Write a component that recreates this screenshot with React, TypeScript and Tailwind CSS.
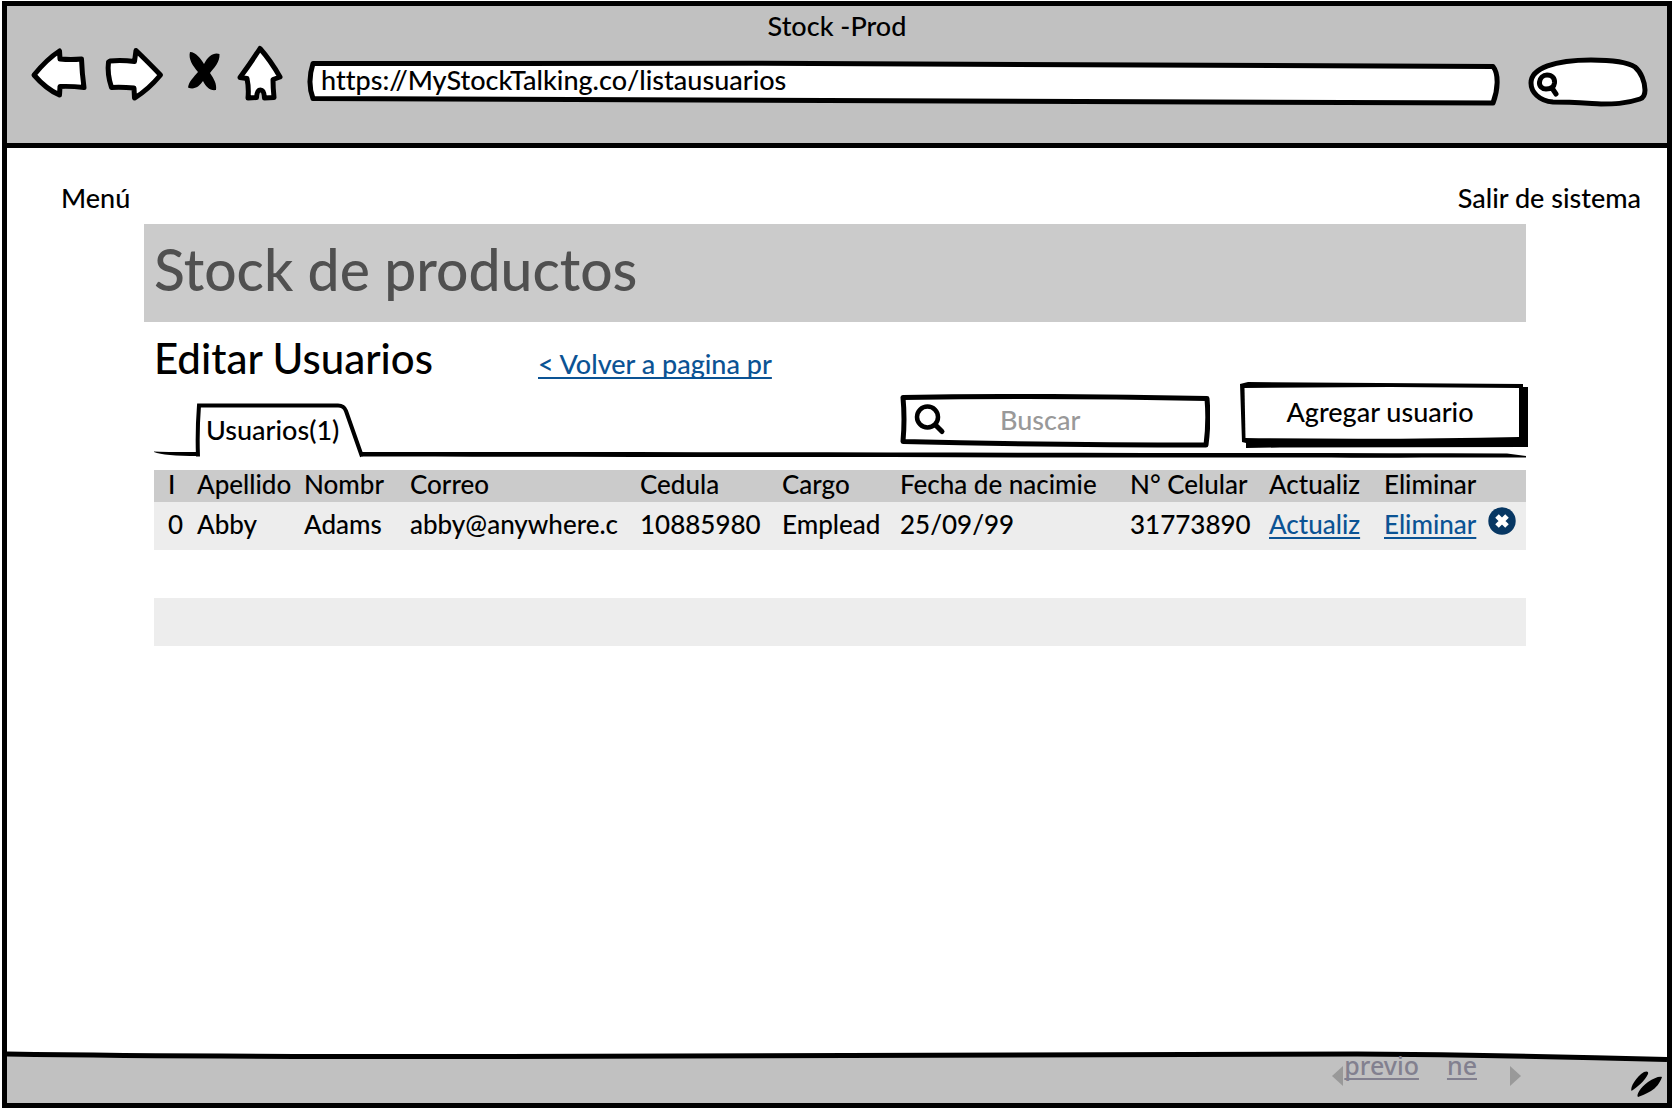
import type { ReactNode } from "react";

const linkStyle = "text-[#0b5394] underline decoration-2 underline-offset-3 [text-decoration-skip-ink:none]";

function IconButton({ label, viewBox, className, children }: { label: string; viewBox: string; className: string; children: ReactNode }) {
  return (
    <button type="button" aria-label={label} className={className}>
      <svg viewBox={viewBox} className="block h-full w-full" fill="#fff" stroke="#000" strokeWidth="5" strokeLinejoin="round" strokeLinecap="round">
        {children}
      </svg>
    </button>
  );
}

function BrowserBar() {
  return (
    <header className="border-b-[5px] border-black bg-[#c1c1c1] pt-1">
      <div className="text-center">Stock -Prod</div>
      <div className="mt-0.5 flex h-[99px] items-start gap-3.5 pr-[18px] pl-[23px]">
        <IconButton label="Atrás" viewBox="30 44 60 60" className="h-15 w-15 shrink-0">
          <path d="M34 75 Q47 59 59.500 51 L60 59 Q71 60 81.500 59 Q82 73 84 87.500 Q71 86 60 86.500 L59.500 95 Q46 89 34 75Z" />
        </IconButton>
        <IconButton label="Adelante" viewBox="104 44 60 60" className="h-15 w-15 shrink-0">
          <path d="M110 61 Q122 60 134.500 61.500 L136 50.500 Q146 60 160.500 75 Q148 90 134.500 98 L134 88 Q122 87 111.500 87.500 Q107 74 108.500 62Z" />
        </IconButton>
        <IconButton label="Detener" viewBox="178 44 44 60" className="h-15 w-11 shrink-0">
          <path
            fill="#000"
            stroke="none"
            d="M190 52 C196 52 201 59 204 64 C208 56 214 52 219.500 54 C220 62 214 68 210 73 C214 79 217 84 216 90 C210 91 206 87 203 81 C199 87 194 90 188 87.500 C189 81 194 77 198 72 C193 66 188 59 190 52Z"
          />
        </IconButton>
        <IconButton label="Inicio" viewBox="236 44 56 60" className="h-15 w-14 shrink-0">
          <path d="M240 77.500 Q250 64 260 48.500 Q271 61 280 77 L273 79.500 Q273 88 274 97.500 L264.500 98 Q264 90 260.500 90 Q257 90 256.500 97.500 L248 98 Q249 88 247 78.500Z" />
        </IconButton>
        <div className="relative mt-3.5 h-12 min-w-0 flex-1">
          <svg viewBox="0 0 1196 48" preserveAspectRatio="none" className="absolute inset-0 h-full w-full" aria-hidden="true">
            <path
              d="M7 5.500 C400 5 800 5 1188 8.500 C1194 16 1193 32 1188 45 C850 45 450 41 7 40.500 C3 30 3 18 7 5.500Z"
              fill="#fff"
              stroke="#000"
              strokeWidth="5"
              strokeLinejoin="round"
              vectorEffect="non-scaling-stroke"
            />
          </svg>
          <input
            aria-label="Dirección"
            defaultValue="https://MyStockTalking.co/listausuarios"
            className="relative mt-1.5 h-8 w-full bg-transparent px-[15px] leading-8 outline-none"
          />
        </div>
        <div className="relative mt-2.5 ml-2.5 h-14 w-31 shrink-0">
          <svg viewBox="0 0 124 56" className="absolute inset-0 h-full w-full" fill="none" stroke="#000" strokeWidth="5" strokeLinecap="round" aria-hidden="true">
            <path
              fill="#fff"
              d="M6 29 C6 14 30 6 66 6 C88 6 104 9 110 13 C116 18 120 28 120 36 C120 41 118 44 115 45 C100 50 88 50 76 50 C58 49 44 48 28 48 C14 47 6 38 6 29Z"
            />
            <path d="M22 21 C27 21 30 24 29.500 29 C29 33 26 35 21 35 C17 35 14 32 14.500 28 C15 24 18 21 22 21Z M27 34 L31 40" />
          </svg>
          <input aria-label="Buscar en la web" className="relative h-full w-full bg-transparent pr-4 pl-10 outline-none" />
        </div>
      </div>
    </header>
  );
}

function UserToolbar() {
  return (
    <div className="relative ml-2.5 flex h-20 justify-between">
      <svg viewBox="0 0 212 80" className="absolute top-0 left-0 h-20 w-[212px]" fill="none" stroke="#000" aria-hidden="true">
        <path d="M0 69.500 Q8 70 44 70 V74 Q10 74 0 70Z" fill="#000" stroke="none" />
        <path d="M44 74.500 Q43 50 45 23.500 H184 Q190 23.500 192 29 L208 74.500" strokeWidth="4" />
      </svg>
      <svg viewBox="0 0 1164 80" preserveAspectRatio="none" className="absolute top-0 right-0 h-20 w-[calc(100%-208px)]" aria-hidden="true">
        <path d="M0 70 C400 70 800 71 1145 71.500 L1164 74 V75.500 C900 76 400 75 0 74.500Z" />
      </svg>
      <button type="button" className="relative mt-7 ml-[52px] h-10">
        Usuarios(1)
      </button>
      <div className="relative -mr-0.5 flex items-start gap-[30px]">
        <div className="relative mt-3 h-[54px] w-[310px]">
          <svg viewBox="0 0 310 54" className="absolute inset-0 h-full w-full" fill="none" stroke="#000" strokeLinecap="round" strokeLinejoin="round" aria-hidden="true">
            <path d="M3 3.500 Q150 1 307 4.500 Q309 28 306 51 Q150 51 3 47.500 Q5 25 3 3.500Z" strokeWidth="5" fill="#fff" />
            <circle cx="27.500" cy="23" r="10.500" strokeWidth="4.500" />
            <path d="M35.500 31 L42 37.500" strokeWidth="5" />
          </svg>
          <input
            type="text"
            aria-label="Buscar usuario"
            placeholder="Buscar"
            className="relative mt-2.5 h-8 w-full bg-transparent pr-4 pl-[100px] leading-8 outline-none placeholder:text-[#999]"
          />
        </div>
        <button type="button" className="relative h-[66px] w-[288px] pb-[7px] pr-2">
          <svg viewBox="0 0 288 66" className="absolute inset-0 h-full w-full" aria-hidden="true">
            <path d="M0 2 L8 0 L283 2 V5 H288 V65 L40 65.500 L6 66 V61 L2 60Z" />
            <path d="M4.500 6 L150 5 L279 6 V55 Q150 58 5.500 56Z" fill="#fff" />
          </svg>
          <span className="relative">Agregar usuario</span>
        </button>
      </div>
    </div>
  );
}

const columns = [
  { title: "I", width: "w-[43px]" },
  { title: "Apellido", width: "w-[107px]" },
  { title: "Nombr", width: "w-[106px]" },
  { title: "Correo", width: "w-[230px]" },
  { title: "Cedula", width: "w-[142px]" },
  { title: "Cargo", width: "w-[118px]" },
  { title: "Fecha de nacimie", width: "w-[230px]" },
  { title: "N° Celular", width: "w-[139px]" },
  { title: "Actualiz", width: "w-[115px]" },
  { title: "Eliminar", width: "w-[142px]" },
];

const user = ["0", "Abby", "Adams", "abby@anywhere.c", "10885980", "Emplead", "25/09/99", "31773890"];

function UserTable() {
  return (
    <table className="mt-2 ml-2.5 w-[calc(100%-10px)] table-fixed border-collapse text-left text-[26px] whitespace-nowrap">
      <thead className="bg-[#cbcbcb]">
        <tr className="h-8">
          {columns.map((c) => (
            <th key={c.title} scope="col" className={`${c.width} p-0 align-top font-medium leading-7 first:pl-3.5`}>
              {c.title}
            </th>
          ))}
        </tr>
      </thead>
      <tbody>
        <tr className="h-12 bg-[#ededed]">
          {user.map((v) => (
            <td key={v} className="p-0 pb-1 first:pl-3.5">
              {v}
            </td>
          ))}
          <td className="p-0 pb-1">
            <a href="#actualizar" className={linkStyle}>Actualiz</a>
          </td>
          <td className="p-0 pb-1">
            <div className="flex items-center justify-between pr-2.5">
              <a href="#eliminar" className={linkStyle}>Eliminar</a>
              <button type="button" aria-label="Eliminar usuario" className="mb-1.5 h-7 w-7">
                <svg viewBox="0 0 28 28" className="block h-7 w-7">
                  <circle cx="14" cy="14" r="13.700" fill="#073763" />
                  <path d="M9 9 L19 19 M19 9 L9 19" stroke="#fff" strokeWidth="5" />
                </svg>
              </button>
            </div>
          </td>
        </tr>
        <tr className="h-12">
          <td colSpan={10} />
        </tr>
        <tr className="h-12 bg-[#ededed]">
          <td colSpan={10} />
        </tr>
      </tbody>
    </table>
  );
}

function StatusBar() {
  return (
    <footer className="relative h-[54px]">
      <svg viewBox="0 0 1660 54" preserveAspectRatio="none" className="absolute inset-0 h-full w-full" aria-hidden="true">
        <path d="M0 5 Q200 8 500 7.500 Q1100 5 1350 5 Q1500 6 1660 10.500 V54 H0Z" fill="#c1c1c1" />
        <path d="M0 5 Q200 8 500 7.500 Q1100 5 1350 5 Q1500 6 1660 10.500" fill="none" stroke="#000" strokeWidth="5" vectorEffect="non-scaling-stroke" />
      </svg>
      <nav aria-label="Paginación" className="relative flex items-start justify-end pr-[146px] font-['Noto_Sans'] text-[25px] leading-8 text-[#82808f]">
        <svg viewBox="0 0 12 20" className="mt-[17px] h-5 w-3" aria-hidden="true">
          <path d="M0 10 L11 0 V20Z" fill="#999" />
        </svg>
        <a href="#previo" className="underline decoration-2 underline-offset-3 [text-decoration-skip-ink:none]">previo</a>
        <a href="#next" className="ml-7 underline decoration-2 underline-offset-3">ne</a>
        <svg viewBox="0 0 12 20" className="mt-[17px] ml-8 h-5 w-3" aria-hidden="true">
          <path d="M12 10 L1 0 V20Z" fill="#999" />
        </svg>
      </nav>
      <svg viewBox="0 0 34 30" className="absolute right-1 bottom-1 h-[30px] w-[34px]" aria-hidden="true">
        <path d="M2.500 22 C1 18 7 8 15 3 C17 2 20 2 19 5 C16 12 8 18 2.500 22Z M9 28 C7 26 11 19 19 13 C25 9 30 7 33 8 C31 14 27 19 22 22 C17 25 12 27 9 28Z" />
      </svg>
    </footer>
  );
}

export default function App() {
  return (
    <div className="flex min-h-screen flex-col bg-white px-0.5 pt-px pb-0.5 font-['Lato',sans-serif] text-[27px] leading-8 font-medium text-black [font-variant-ligatures:none]">
      <div className="flex flex-1 flex-col border-[5px] border-black">
        <BrowserBar />
        <main className="flex-1 pt-[34px]">
          <nav className="flex justify-between pr-[26px] pl-[54px]">
            <a href="#menu">Menú</a>
            <a href="#salir">Salir de sistema</a>
          </nav>
          <div className="mt-2.5 mr-[141px] ml-[137px]">
            <h1 className="bg-[#cbcbcb] px-2.5 pt-[13px] pb-[21px] text-[57px] leading-[64px] text-[#505050]">Stock de productos</h1>
            <div className="mt-3 flex items-baseline px-2.5">
              <h2 className="w-[384px] text-[42px] leading-[48px]">Editar Usuarios</h2>
              <a href="#volver" className={linkStyle}>&lt; Volver a pagina pr</a>
            </div>
            <UserToolbar />
            <UserTable />
          </div>
        </main>
        <StatusBar />
      </div>
    </div>
  );
}
